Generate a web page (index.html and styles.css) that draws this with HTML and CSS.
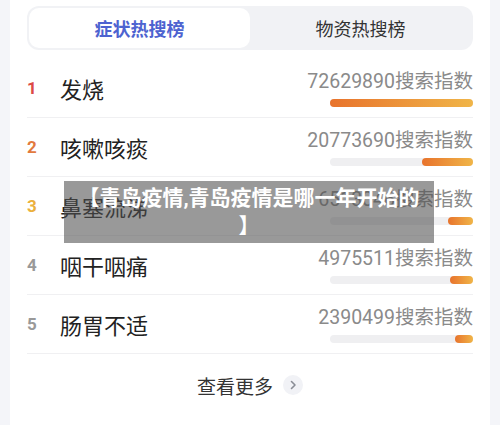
FILE: index.html
```html
<!DOCTYPE html>
<html lang="zh-CN">
<head>
  <meta charset="UTF-8" />
  <meta name="viewport" content="width=device-width, initial-scale=1.0">
  <title>疫情热搜榜</title>
  <link rel="stylesheet" href="styles.css">
</head>
<body>

  <div class="card">
    <!-- 顶部切换标签 -->
    <div class="tabs">
      <div class="tab active">症状热搜榜</div>
      <div class="tab">物资热搜榜</div>
    </div>

    <!-- 热搜列表 -->
    <div class="rank-list">
      <div class="rank-row">
        <span class="rank-no no1">1</span>
        <span class="rank-name">发烧</span>
        <div class="rank-hot">
          <span class="hot-text">72629890搜索指数</span>
          <div class="bar"><div class="bar-fill" style="width: 143px"></div></div>
        </div>
      </div>
      <div class="rank-row">
        <span class="rank-no no2">2</span>
        <span class="rank-name">咳嗽咳痰</span>
        <div class="rank-hot">
          <span class="hot-text">20773690搜索指数</span>
          <div class="bar"><div class="bar-fill" style="width: 51px"></div></div>
        </div>
      </div>
      <div class="rank-row">
        <span class="rank-no no3">3</span>
        <span class="rank-name">鼻塞流涕</span>
        <div class="rank-hot">
          <span class="hot-text">6513046搜索指数</span>
          <div class="bar"><div class="bar-fill" style="width: 25px"></div></div>
        </div>
      </div>
      <div class="rank-row">
        <span class="rank-no">4</span>
        <span class="rank-name">咽干咽痛</span>
        <div class="rank-hot">
          <span class="hot-text">4975511搜索指数</span>
          <div class="bar"><div class="bar-fill" style="width: 23px"></div></div>
        </div>
      </div>
      <div class="rank-row">
        <span class="rank-no">5</span>
        <span class="rank-name">肠胃不适</span>
        <div class="rank-hot">
          <span class="hot-text">2390499搜索指数</span>
          <div class="bar"><div class="bar-fill" style="width: 18px"></div></div>
        </div>
      </div>
    </div>

    <div class="more">
      <span>查看更多</span>
      <span class="more-arrow">
        <svg width="20" height="20" viewBox="0 0 20 20"><path d="M8.5 6.5 L12 10 L8.5 13.5" fill="none" stroke="#8a8d96" stroke-width="1.6" stroke-linecap="round" stroke-linejoin="round"/></svg>
      </span>
    </div>
  </div>

  <!-- 标题浮层 -->
  <div class="title-overlay">【青岛疫情,青岛疫情是哪一年开始的】</div>

</body>
</html>
```

FILE: styles.css
```css
body {
  margin: 0;
  background: #f4f5f9;
  font-family: Roboto, "Noto Sans CJK SC", sans-serif;
  color: #222;
}

.card {
  margin: 0 10px;
  min-height: 425px;
  background: #fff;
  padding: 6px 17px 0;
  box-sizing: border-box;
}

.tabs {
  display: flex;
  height: 44px;
  padding: 2px;
  box-sizing: border-box;
  background: #f1f2f5;
  border-radius: 12px;
}

.tab {
  flex: 1;
  display: flex;
  align-items: center;
  justify-content: center;
  font-size: 18px;
  color: #333;
  border-radius: 10px;
}

.tab.active {
  background: #fff;
  color: #4d63d0;
  font-weight: bold;
}

.rank-list {
  margin-top: 9px;
}

.rank-row {
  display: flex;
  align-items: center;
  height: 59px;
  border-bottom: 1px solid #f0f0f2;
  box-sizing: border-box;
}

.rank-no {
  width: 33px;
  font-size: 17px;
  font-weight: bold;
  color: #999;
}

.rank-no.no1 { color: #dc4a45; }
.rank-no.no2 { color: #e27a3e; }
.rank-no.no3 { color: #ebb03c; }

.rank-name {
  flex: 1;
  font-size: 22px;
  color: #222;
}

.rank-hot {
  display: flex;
  flex-direction: column;
  align-items: flex-end;
  gap: 5px;
}

.hot-text {
  font-size: 19.5px;
  line-height: 24px;
  color: #8a8a8a;
}

.bar {
  width: 143px;
  height: 8px;
  border-radius: 4px;
  background: #efeff1;
  display: flex;
  justify-content: flex-end;
}

.bar-fill {
  height: 8px;
  border-radius: 4px;
  background: linear-gradient(90deg, #e8732c, #f0b548);
}

.more {
  display: flex;
  align-items: center;
  justify-content: center;
  gap: 10px;
  height: 62px;
  font-size: 19px;
  color: #333;
}

.more-arrow {
  width: 20px;
  height: 20px;
  border-radius: 50%;
  background: #f1f2f6;
  display: flex;
}

.title-overlay {
  position: absolute;
  left: 64px;
  top: 181px;
  width: 370px;
  box-sizing: border-box;
  padding: 3px 12px;
  background: rgba(80, 80, 80, 0.58);
  color: #fff;
  font-size: 21px;
  font-weight: bold;
  line-height: 28px;
  text-align: center;
  line-break: anywhere;
}
```
